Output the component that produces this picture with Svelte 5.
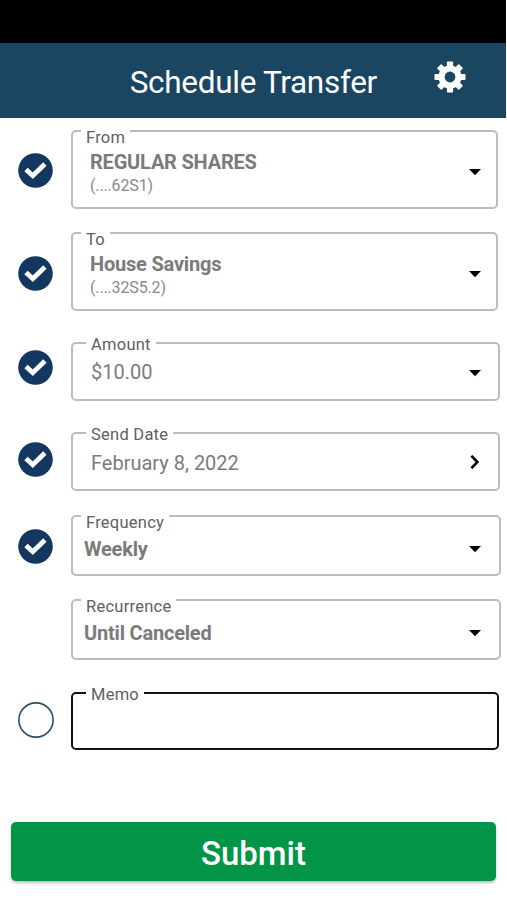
<script lang="ts">
    type Field = {
        id: string;
        label: string;
        value: string;
        detail?: string;
        icon?: 'caret' | 'chevron';
        status: 'done' | 'empty' | 'none';
    };

    let fields: Field[] = $state([
        { id: 'from', label: 'From', value: 'REGULAR SHARES', detail: '(....62S1)', icon: 'caret', status: 'done' },
        { id: 'to', label: 'To', value: 'House Savings', detail: '(....32S5.2)', icon: 'caret', status: 'done' },
        { id: 'amount', label: 'Amount', value: '$10.00', icon: 'caret', status: 'done' },
        { id: 'date', label: 'Send Date', value: 'February 8, 2022', icon: 'chevron', status: 'done' },
        { id: 'frequency', label: 'Frequency', value: 'Weekly', icon: 'caret', status: 'done' },
        { id: 'recurrence', label: 'Recurrence', value: 'Until Canceled', icon: 'caret', status: 'none' },
        { id: 'memo', label: 'Memo', value: '', status: 'empty' }
    ]);
</script>

<div class="screen">
    <div class="status-bar"></div>
    <header class="header">
        <h1>Schedule Transfer</h1>
        <button class="settings" aria-label="Settings">
            <svg viewBox="-16 -16 32 32" width="32" height="32">
                <g fill="#fff">
                    {#each [0, 45, 90, 135] as angle}
                        <rect x="-3.1" y="-15.5" width="6.2" height="31" rx="0.8" transform="rotate({angle})" />
                    {/each}
                    <circle r="11.6" />
                </g>
                <circle r="5.4" fill="#1a4662" />
            </svg>
        </button>
    </header>

    <main class="form">
        {#each fields as field (field.id)}
            <div class="row {field.id}">
                <div class="status">
                    {#if field.status === 'done'}
                        <svg viewBox="0 0 35 35" width="35" height="35">
                            <circle cx="17.5" cy="17.5" r="17.3" fill="#143760" />
                            <path d="M8 16.4 L14.8 22.8 L26.9 11" fill="none" stroke="#fff" stroke-width="4.8" />
                        </svg>
                    {:else if field.status === 'empty'}
                        <svg viewBox="0 0 36 36" width="36" height="36">
                            <circle cx="18" cy="18" r="17.1" fill="#fff" stroke="#28506d" stroke-width="1.6" />
                        </svg>
                    {/if}
                </div>
                <div class="box">
                    <span class="label">{field.label}</span>
                    <div class="content">
                        <span class="value">{field.value}</span>
                        {#if field.detail}
                            <span class="detail">{field.detail}</span>
                        {/if}
                    </div>
                    {#if field.icon === 'caret'}
                        <svg class="icon" viewBox="0 0 14 14" width="14" height="14">
                            <path d="M1 4 H13 L7 10.3 Z" />
                        </svg>
                    {:else if field.icon === 'chevron'}
                        <svg class="icon" viewBox="0 0 14 14" width="14" height="14">
                            <path d="M3.4 0.8 L9.4 7 L3.4 13.2" fill="none" stroke="#000" stroke-width="2.6" />
                        </svg>
                    {/if}
                </div>
            </div>
        {/each}
    </main>

    <button class="submit">Submit</button>
</div>

<style>
    :global(body) {
        margin: 0;
        background: #fff;
    }

    .screen {
        width: 507px;
        height: 900px;
        overflow: hidden;
        background: #fff;
        font-family: Roboto, "Liberation Sans", sans-serif;
    }

    .status-bar {
        width: 506px;
        height: 43px;
        background: #000;
    }

    .header {
        display: flex;
        align-items: center;
        justify-content: flex-end;
        box-sizing: border-box;
        width: 506px;
        height: 75px;
        padding-right: 40px;
        background: #1a4662;
    }

    h1 {
        margin: 5px 57px 0 0;
        color: #fff;
        font-size: 31.5px;
        font-weight: 400;
        letter-spacing: -0.3px;
        line-height: 40px;
        white-space: nowrap;
    }

    button {
        border: 0;
        cursor: pointer;
        font-family: inherit;
    }

    .settings {
        display: flex;
        margin-bottom: 7px;
        padding: 0;
        background: none;
    }

    .form {
        display: flex;
        flex-direction: column;
        height: 704px;
    }

    .row {
        display: flex;
        align-items: center;
        height: 59px;
    }

    .status {
        display: flex;
        justify-content: center;
        width: 71px;
    }

    .box {
        position: relative;
        display: flex;
        align-items: center;
        justify-content: space-between;
        box-sizing: border-box;
        width: 429px;
        height: 100%;
        padding: 0 18px;
        border: 2px solid #bcbcbc;
        border-radius: 5px;
    }

    .label {
        position: absolute;
        top: -8px;
        left: 13px;
        padding: 0 5px;
        background: #fff;
        color: #606060;
        font-size: 16.5px;
        letter-spacing: 0.25px;
        line-height: 18px;
        white-space: nowrap;
    }

    .content {
        display: flex;
        flex-direction: column;
    }

    .value {
        color: #7b7b7b;
        font-size: 20px;
        line-height: 24px;
    }

    .detail {
        color: #8a8a8a;
        font-size: 16px;
        letter-spacing: -0.15px;
        line-height: 24px;
    }

    .icon {
        margin-right: -2px;
    }

    .from,
    .to {
        height: 79px;
    }

    .from {
        margin-top: 12px;
    }

    .to {
        margin-top: 23px;
    }

    .from .status {
        margin-top: 1px;
    }

    .to .status {
        margin-top: 3px;
    }

    .from .box,
    .to .box {
        width: 427px;
        padding: 0 16px 0 17px;
    }

    .from .content,
    .to .content {
        margin-top: 9px;
    }

    .from .icon,
    .to .icon {
        margin-top: 4px;
    }

    .from .label,
    .to .label,
    .frequency .label,
    .recurrence .label {
        left: 8px;
        top: -3px;
    }

    .from .value,
    .to .value,
    .frequency .value,
    .recurrence .value {
        font-weight: 700;
        letter-spacing: -0.2px;
    }

    .amount {
        margin-top: 31px;
    }

    .amount .status {
        margin-bottom: 9px;
    }

    .amount .icon {
        margin-top: 3px;
    }

    .date {
        margin-top: 31px;
    }

    .date .status {
        margin-bottom: 4px;
    }

    .date .label {
        top: -8px;
    }

    .date .content {
        margin-top: 2px;
    }

    .frequency,
    .recurrence {
        height: 61px;
    }

    .frequency {
        margin-top: 24px;
    }

    .recurrence {
        margin-top: 23px;
    }

    .frequency .status {
        margin-top: 1px;
    }

    .frequency .box,
    .recurrence .box {
        width: 430px;
        padding: 0 19px 0 11px;
    }

    .frequency .content,
    .recurrence .content,
    .frequency .icon,
    .recurrence .icon {
        margin-top: 6px;
    }

    .memo {
        margin-top: 32px;
        height: 58px;
    }

    .memo .status {
        margin-bottom: 2px;
    }

    .memo .box {
        width: 428px;
        border-color: #111;
    }

    .submit {
        display: block;
        width: 485px;
        height: 59px;
        margin-left: 11px;
        padding: 4px 0 0;
        border-radius: 5px;
        background: #039547;
        box-shadow: 0 2px 3px rgba(0, 0, 0, 0.25);
        color: #fff;
        font-size: 33px;
        font-weight: 500;
    }
</style>
